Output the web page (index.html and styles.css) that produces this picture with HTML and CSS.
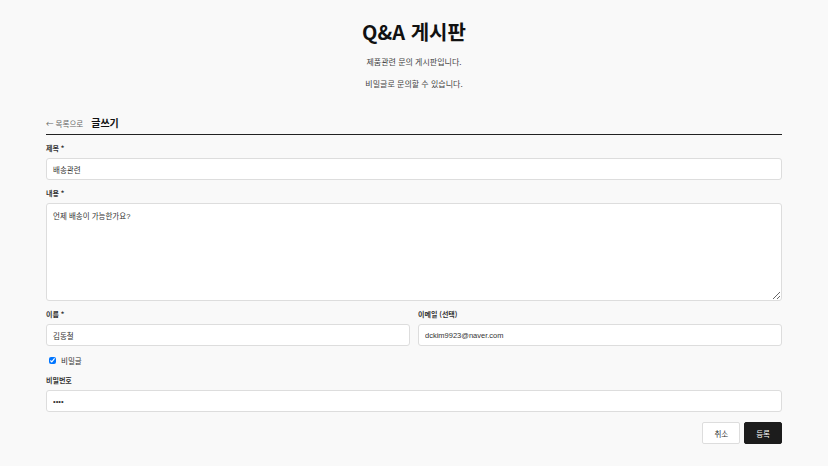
FILE: index.html
```html
<!DOCTYPE html>
<html lang="ko">
<head>
    <meta charset="utf-8">
    <title>Q&amp;A 게시판</title>
    <link rel="stylesheet" href="styles.css">
</head>
<body>
    <!-- 헤더 -->
    <header class="board-head">
        <h1>Q&amp;A 게시판</h1>
        <p>제품관련 문의 게시판입니다.</p>
        <p>비밀글로 문의할 수 있습니다.</p>
    </header>

    <main class="write">
        <div class="write-top">
            <a class="back" href="#">← 목록으로</a>
            <span class="write-title">글쓰기</span>
        </div>

        <form class="write-form">
            <div class="field">
                <label>제목 *</label>
                <input type="text" value="배송관련">
            </div>
            <div class="field">
                <label>내용 *</label>
                <textarea>언제 배송이 가능한가요?</textarea>
            </div>
            <div class="row">
                <div class="field">
                    <label>이름 *</label>
                    <input type="text" value="김동철">
                </div>
                <div class="field">
                    <label>이메일 (선택)</label>
                    <input type="text" value="dckim9923@naver.com">
                </div>
            </div>
            <label class="check"><input type="checkbox" checked> 비밀글</label>
            <div class="field">
                <label>비밀번호</label>
                <input type="password" value="1234">
            </div>
            <div class="actions">
                <button type="button" class="btn">취소</button>
                <button type="button" class="btn btn-dark">등록</button>
            </div>
        </form>
    </main>
</body>
</html>
```

FILE: styles.css
```css
* {
    box-sizing: border-box;
}

body {
    margin: 0;
    background: #f9f9f9;
    color: #222;
    font-family: "Noto Sans CJK KR", "Noto Sans", sans-serif;
}

/* 헤더 */
.board-head {
    text-align: center;
    padding-top: 17px;
}

.board-head h1 {
    margin: 0 0 9px;
    font-size: 20px;
    line-height: 30px;
    font-weight: 700;
    color: #111;
}

.board-head p {
    margin: 0 0 10px;
    font-size: 8px;
    line-height: 12px;
    color: #444;
}

/* 글쓰기 영역 */
.write {
    width: 736px;
    margin: 25px auto 0;
}

.write-top {
    display: flex;
    align-items: baseline;
    gap: 8px;
    padding-bottom: 4px;
    border-bottom: 1.5px solid #222;
}

.back {
    font-size: 7.5px;
    color: #666;
    text-decoration: none;
}

.write-title {
    font-size: 10px;
    font-weight: 700;
    color: #111;
}

.write-form {
    display: flex;
    flex-direction: column;
    gap: 8px;
    padding-top: 8px;
}

.field {
    display: flex;
    flex-direction: column;
    gap: 5px;
}

.field label {
    font-size: 7px;
    line-height: 10px;
    font-weight: 700;
    color: #333;
}

.field input,
.field textarea {
    width: 100%;
    height: 22px;
    border: 1px solid #ddd;
    border-radius: 3px;
    background: #fff;
    padding: 0 6px;
    font-family: "Liberation Sans", "Noto Sans CJK KR", sans-serif;
    font-size: 7.5px;
    color: #333;
}

.field textarea {
    height: 98px;
    padding: 6px;
    resize: vertical;
}

.row {
    display: grid;
    grid-template-columns: 1fr 1fr;
    gap: 8px;
}

.check {
    display: flex;
    align-items: center;
    gap: 5px;
    font-size: 7.5px;
    color: #333;
    padding: 1px 0 1px 3px;
}

.check input {
    width: 7px;
    height: 7px;
    margin: 0;
}

.actions {
    display: flex;
    justify-content: flex-end;
    gap: 4px;
    margin-top: 2px;
}

.btn {
    height: 22px;
    padding: 0 11px;
    border: 1px solid #ddd;
    border-radius: 2px;
    background: #fff;
    font-family: "Noto Sans CJK KR", sans-serif;
    font-size: 7.5px;
    color: #333;
}

.btn-dark {
    background: #1c1c1c;
    border-color: #1c1c1c;
    color: #fff;
}
```
